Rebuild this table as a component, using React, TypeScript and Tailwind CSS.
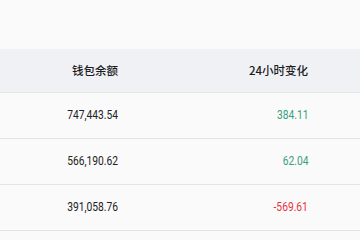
const rows = [
  { balance: "747,443.54", change: "384.11" },
  { balance: "566,190.62", change: "62.04" },
  { balance: "391,058.76", change: "-569.61" },
];

export default function App() {
  return (
    <div className="h-[240px] w-[360px] overflow-hidden bg-[#fafafa] pt-[49px]">
      <div className="grid h-[44px] grid-cols-[134px_190px_1fr] items-center border-b border-[#e6e6e8] bg-[#f0f1f5] font-['Noto_Sans_CJK_SC',sans-serif] text-[11.5px] font-medium text-[#1c1c1e]">
        <div className="pr-4 text-right">钱包余额</div>
        <div className="pr-4 text-right">24小时变化</div>
        <div />
      </div>
      {rows.map(r => (
        <div
          key={r.balance}
          className="grid h-[46px] grid-cols-[134px_190px_1fr] items-center border-b border-[#e3e3e3] font-['Roboto',sans-serif] text-[12.5px]"
        >
          <div className="pr-4 text-right text-[#222]">
            <span className="inline-block origin-right scale-x-[0.82]">{r.balance}</span>
          </div>
          <div className={`pr-4 text-right ${r.change.startsWith("-") ? "text-[#e8333f]" : "text-[#36a080]"}`}>
            <span className="inline-block origin-right scale-x-[0.82]">{r.change}</span>
          </div>
          <div />
        </div>
      ))}
    </div>
  );
}
